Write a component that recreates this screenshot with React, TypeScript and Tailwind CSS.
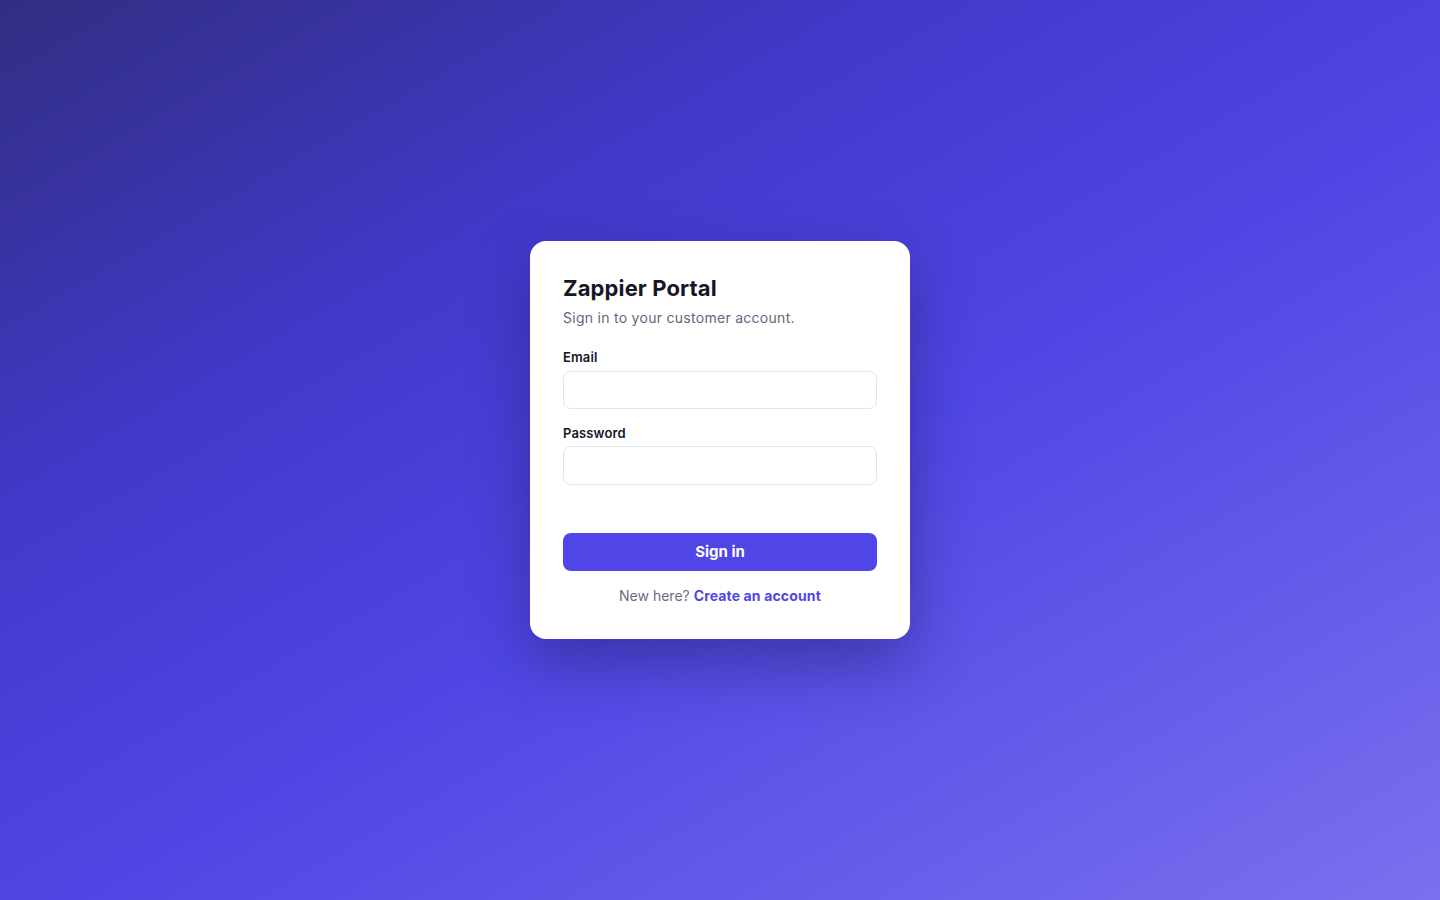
export default function App() {
  return (
    <div
      className="flex min-h-screen items-center justify-center bg-[linear-gradient(150deg,#312e81_0%,#4338ca_30%,#4f46e5_55%,#7b70ee_100%)] pb-[21px]"
      style={{ fontFamily: "Inter, 'Noto Sans', sans-serif" }}
    >
      <div className="w-[380px] rounded-2xl border border-white/60 bg-white px-8 pb-8 pt-8 shadow-[0_24px_60px_rgba(30,27,90,0.45)]">
        <h1 className="pt-px text-[22px] font-bold leading-[27px] tracking-[0.005em] text-[#161628]">
          Zappier Portal
        </h1>
        <p className="mt-1.5 text-[14px] leading-5 tracking-[0.02em] text-[#64667e]">
          Sign in to your customer account.
        </p>

        <form className="mt-5" onSubmit={(e) => e.preventDefault()}>
          <label className="block">
            <span className="block text-[13px] font-semibold leading-[18px] tracking-[0.01em] text-[#161628]">
              Email
            </span>
            <input
              type="email"
              className="mt-[5px] block h-[38px] w-full rounded-lg border border-[#e3e3ef] bg-white px-3 text-sm outline-none"
            />
          </label>

          <label className="mt-[15px] block">
            <span className="block text-[13px] font-semibold leading-[18px] tracking-[0.01em] text-[#161628]">
              Password
            </span>
            <input
              type="password"
              className="mt-1 block h-[39px] w-full rounded-lg border border-[#e3e3ef] bg-white px-3 text-sm outline-none"
            />
          </label>

          <button
            type="submit"
            className="mt-[48px] block h-[38px] w-full rounded-lg bg-[#4f46e5] pt-0.5 text-[15px] font-bold text-white"
          >
            Sign in
          </button>
        </form>

        <p className="mt-[15px] text-center text-[14px] leading-5 text-[#6b6d80]">
          New here?{" "}
          <a href="#" className="font-bold tracking-[0.01em] text-[#4f46e5]">
            Create an account
          </a>
        </p>
      </div>
    </div>
  );
}
